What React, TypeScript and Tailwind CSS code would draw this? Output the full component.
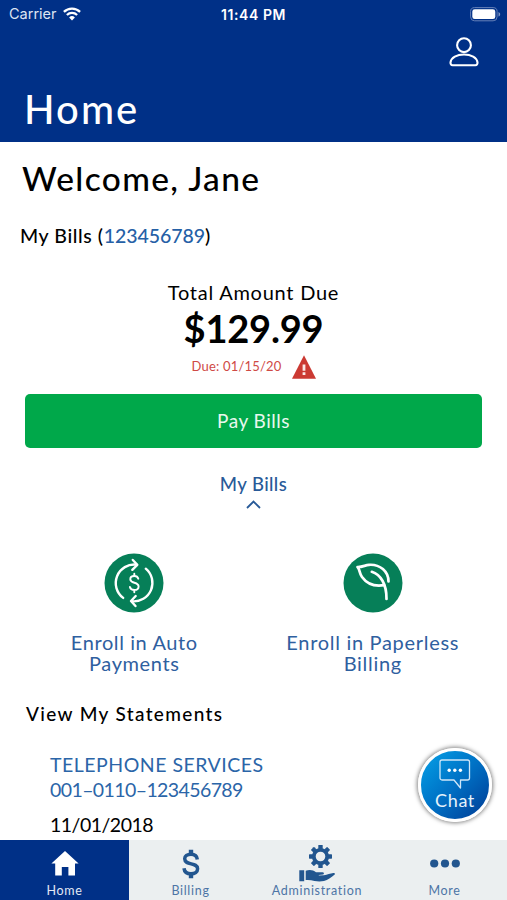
import React from 'react';
import clsx from 'clsx';

interface NavItem {
  label: string;
  icon: React.ReactNode;
}

function WifiIcon() {
  return (
    <svg width="18" height="14" viewBox="0 0 18 14" fill="none" stroke="white" strokeWidth="2.3">
      <path d="M0.9 4.9a11.6 11.6 0 0 1 16.2 0" />
      <path d="M3.9 8a7.4 7.4 0 0 1 10.2 0" />
      <path d="M9 13.6 6.1 10.5a4.2 4.2 0 0 1 5.8 0z" fill="white" stroke="none" />
    </svg>
  );
}

function BatteryIcon() {
  return (
    <svg width="31" height="15" viewBox="0 0 31 15">
      <rect x="0.6" y="0.6" width="26.5" height="13.2" rx="4" fill="none" stroke="#6580b8" strokeWidth="1" />
      <rect x="2.3" y="2.3" width="23" height="9.8" rx="2.4" fill="white" />
      <path d="M28.5 5v4.6c1-.4 1.7-1.3 1.7-2.3S29.5 5.4 28.5 5z" fill="#7f96c5" />
    </svg>
  );
}

function UserIcon() {
  return (
    <svg width="30" height="30" viewBox="0 0 30 30" fill="none" stroke="white" strokeWidth="2.1">
      <circle cx="15" cy="8.2" r="6.9" />
      <path d="M3.6 28.2h22.8c1.5 0 2.2-1.1 2.1-2.8C28 20.5 22 17.5 15 17.5S2 20.5 1.5 25.4c-.1 1.7.6 2.8 2.1 2.8z" />
    </svg>
  );
}

function AlertIcon() {
  return (
    <svg width="24" height="24" viewBox="0 0 24 24">
      <path d="M12 0.3 24 23.8H0z" fill="#cb3a33" />
      <path d="M10.6 9.5h2.8v6.2h-2.8zM10.6 17.3h2.8v2.6h-2.8z" fill="#fbe9e7" />
    </svg>
  );
}

function AutoPayIcon() {
  return (
    <svg width="60" height="60" viewBox="0 0 60 60" fill="none" stroke="white" strokeWidth="2.4" strokeLinecap="round" strokeLinejoin="round">
      <circle cx="30" cy="30" r="29.5" fill="#067f58" stroke="none" />
      <path d="M19.2 44.9A18.5 18.5 0 0 1 32.5 11.7" />
      <path d="M28.8 7 33.3 11.8l-5 5" />
      <path d="M41.8 15.7A18.5 18.5 0 0 1 28 48.3" />
      <path d="M31.7 43 27 48l4.5 5" />
      <g strokeWidth="1.9">
        <path d="M34.3 25.7c-.5-1.8-2-2.7-4-2.7-2.4 0-4 1.2-4 3.2 0 4.6 8.3 2.5 8.3 7.2 0 2.2-1.8 3.5-4.2 3.5-2.3 0-4-1-4.5-3" />
        <path d="M30.3 20.7v2.3M30.3 37v2.3" />
      </g>
    </svg>
  );
}

function LeafIcon() {
  return (
    <svg width="60" height="60" viewBox="0 0 60 60" fill="none" stroke="white" strokeWidth="2.7" strokeLinecap="round" strokeLinejoin="round">
      <circle cx="30" cy="30" r="29.5" fill="#067f58" stroke="none" />
      <path d="M45.5 28.5C45.5 18.5 37 11 26 11.8c-4 .3-6.500 2.400-11.500 2.200 2.700 3.300 1.700 6 4.500 10C23.300 30 30 34 41 32.200" />
      <path d="M28.8 18.8C37.5 21.5 43.7 31 43.5 46" />
    </svg>
  );
}

function ChatIcon() {
  return (
    <svg width="32" height="30" viewBox="0 0 32 30" fill="none" stroke="#cfe6f8" strokeWidth="1.3" strokeLinejoin="round">
      <path d="M3 1h25.5a2 2 0 0 1 2 2v16a2 2 0 0 1-2 2h-7v8l-6.500-8H3a2 2 0 0 1-2-2V3a2 2 0 0 1 2-2z" />
      <g fill="white" stroke="none">
        <circle cx="10.2" cy="11.3" r="1.7" />
        <circle cx="15.8" cy="11.3" r="1.7" />
        <circle cx="21.4" cy="11.3" r="1.7" />
      </g>
    </svg>
  );
}

function HomeIcon() {
  return (
    <svg width="28" height="25" viewBox="0 0 28 25" fill="white">
      <path d="M14 0 27.6 12.6H24V24.5h-6.6V16h-6.6v8.5H4.2V12.6H.4z" />
    </svg>
  );
}

function DollarIcon() {
  return (
    <svg width="18" height="30" viewBox="0 0 18 30" fill="none" stroke="#22568f" strokeWidth="3.5">
      <path d="M15.3 10.5C15 7 12.7 5.3 9 5.3c-3.8 0-6.3 1.7-6.3 4.5 0 7 12.9 3.2 12.9 10 0 3.2-2.8 5-6.6 5-4.1 0-6.6-1.9-7-5.6" />
      <path d="M9 .8v4M9 25v4.2" strokeWidth="4.4" />
    </svg>
  );
}

function AdminIcon() {
  const teeth = [0, 45, 90, 135, 180, 225, 270, 315];
  return (
    <svg width="37" height="37" viewBox="0 0 37 37" fill="#22568f">
      <circle cx="21.5" cy="11.5" r="6.7" fill="none" stroke="#22568f" strokeWidth="3.8" />
      {teeth.map((angle) => (
        <rect key={angle} x="19.3" y="0" width="4.4" height="4.5" rx="0.6" transform={`rotate(${angle} 21.5 11.5)`} />
      ))}
      <path d="M.3 25.2h4.900v11H.3zM6.700 25.700c4-1.300 7.500-.7 10.300 1.500h6.500c1.700.2 1.900 1.700.6 2.400l-4.300.5v.3l5.200-.1c3.300-.8 6.200-2 9.300-2.400 1.700-.1 2.300.9 1.100 1.900-3.300 2.600-6.600 5-10.400 6.300-3.200.6-6.400.5-9.500 0-3-.9-5.700-1.400-8.800-1z" />
    </svg>
  );
}

function DotsIcon() {
  return (
    <svg width="30" height="9" viewBox="0 0 30 9" fill="#22568f">
      <circle cx="4.2" cy="4.5" r="4.1" />
      <circle cx="15" cy="4.5" r="4.1" />
      <circle cx="25.8" cy="4.5" r="4.1" />
    </svg>
  );
}

const navItems: NavItem[] = [
  { label: 'Home', icon: <HomeIcon /> },
  { label: 'Billing', icon: <DollarIcon /> },
  { label: 'Administration', icon: <AdminIcon /> },
  { label: 'More', icon: <DotsIcon /> },
];

export default function App() {
  return (
    <div className="relative flex h-[900px] w-[507px] flex-col overflow-hidden bg-white font-['Lato',sans-serif] text-black">
      <header className="h-[142px] shrink-0 bg-[#003087] text-white">
        <div className="grid h-7 grid-cols-3 items-center pl-[9px] pr-[6px] font-['Inter',sans-serif]">
          <div className="flex items-center gap-[6px] text-[14.5px] text-[#dde4f2]">
            <span>Carrier</span>
            <WifiIcon />
          </div>
          <span className="-ml-[3px] text-center text-[14px] font-semibold tracking-[0.6px]">11:44 PM</span>
          <div className="flex justify-end">
            <BatteryIcon />
          </div>
        </div>
        <div className="flex justify-end pr-7 pt-[9px]">
          <UserIcon />
        </div>
        <h1 className="pl-6 pt-5 text-[40px] font-medium leading-[44px] tracking-[2.1px]">Home</h1>
      </header>

      <main className="flex min-h-0 flex-1 flex-col overflow-hidden whitespace-nowrap">
        <h2 className="pl-[22px] pt-4 text-[33.5px] font-medium leading-10 tracking-[1.35px]">Welcome, Jane</h2>
        <p className="pl-[20px] pt-[26px] text-[19.5px] font-medium leading-6 tracking-[0.6px]">
          My Bills (<span className="tracking-[-0.05px] text-[#2560a6]">123456789</span>)
        </p>

        <section className="flex flex-col items-center px-[25px] pt-8">
          <p className="text-[20px] leading-6 tracking-[0.75px]">Total Amount Due</p>
          <p className="mt-0.5 text-[38px] font-bold leading-[44px] tracking-[-0.2px]">$129.99</p>
          <div className="mt-[5px] flex h-6 items-center gap-[10px] text-[#cf4a45]">
            <span className="text-[13px] tracking-[0.2px]">Due: 01/15/20</span>
            <AlertIcon />
          </div>
          <button className="mt-[15px] h-[54px] w-full rounded-[5px] bg-[#00a84a] text-[19px] tracking-[0.5px] text-[#e8f8ee]">
            Pay Bills
          </button>
          <button className="mt-6 flex flex-col items-center text-[#285a98]">
            <span className="text-[18.5px] font-medium leading-6 tracking-[0.4px]">My Bills</span>
            <svg className="mt-1" width="15" height="9" viewBox="0 0 15 9" fill="none" stroke="#285a98" strokeWidth="1.8">
              <path d="M1 8 7.5 1.5 14 8" />
            </svg>
          </button>
        </section>

        <section className="mt-[44px] grid grid-cols-2 px-[15px] text-center text-[20px] leading-[21px] text-[#2f609f]">
          <div className="flex flex-col items-center">
            <AutoPayIcon />
            <p className="mt-[19px] tracking-[0.6px]">Enroll in Auto<br />Payments</p>
          </div>
          <div className="flex flex-col items-center">
            <LeafIcon />
            <p className="mt-[19px] tracking-[0.7px]">Enroll in Paperless<br />Billing</p>
          </div>
        </section>

        <section className="pt-7">
          <h3 className="pl-[26px] text-[19px] font-medium leading-6 tracking-[1.35px]">View My Statements</h3>
          <div className="pl-[50px] pt-[26px] text-[19.5px]">
            <p className="leading-[25px] tracking-[0.5px] text-[#2b65a8]">TELEPHONE SERVICES</p>
            <p className="leading-[25px] tracking-[-0.6px] text-[#2b65a8]">001–0110–123456789</p>
            <p className="mt-[10px] leading-[25px] tracking-[-0.5px]">11/01/2018</p>
          </div>
        </section>
      </main>

      <nav className="grid h-[60px] shrink-0 grid-cols-[129px_123px_130px_125px] bg-[#ebeff0]">
        {navItems.map((item, index) => (
          <button
            key={item.label}
            className={clsx('flex flex-col items-center', index === 0 ? 'bg-[#003087] text-[#e3e9f5]' : 'text-[#4d75a6]')}
          >
            <span className="flex h-[42px] items-center pt-[5px]">{item.icon}</span>
            <span className="text-[12.5px] leading-[18px] tracking-[0.7px]">{item.label}</span>
          </button>
        ))}
      </nav>

      <button className="absolute left-[418px] top-[748px] flex h-[74px] w-[74px] flex-col items-center rounded-full border-[3px] border-white bg-linear-to-br from-[#0aa2e8] via-[#0070c4] to-[#003a94] pt-2 text-[#e6f2fb] shadow-[0_0_4px_1px_rgba(0,0,0,0.5)]">
        <ChatIcon />
        <span className="-mt-px text-[18px] leading-6 tracking-[0.6px]">Chat</span>
      </button>
    </div>
  );
}
